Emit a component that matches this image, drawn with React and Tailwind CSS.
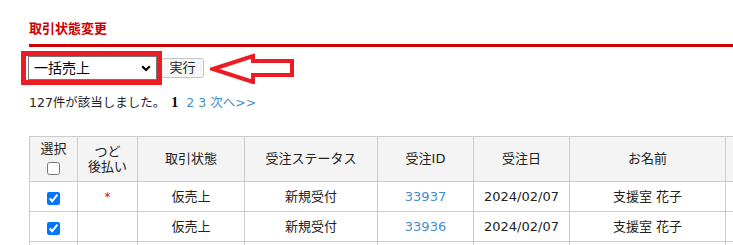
import React from "react";

const font = { fontFamily: '"DejaVu Sans", "Noto Sans CJK JP", sans-serif' };

function Th({ children, w }) {
  return (
    <th className={`border border-[#cccccc] bg-[#f3f4f3] font-normal text-[13px] text-[#222] text-center align-middle p-0 ${w}`}>
      {children}
    </th>
  );
}

function Td({ children, color = "text-[#222]" }) {
  return (
    <td className={`border border-[#cccccc] text-[13px] text-center align-middle p-0 h-[30px] ${color}`}>
      {children}
    </td>
  );
}

function Row({ star, id }) {
  return (
    <tr>
      <Td>
        <input type="checkbox" defaultChecked className="w-[13px] h-[13px] align-middle m-0 mt-[2px]" />
      </Td>
      <Td>{star ? <span className="text-[#ff0000] text-[12px]">*</span> : null}</Td>
      <Td>仮売上</Td>
      <Td>新規受付</Td>
      <Td color="text-[#3f8fcf]">{id}</Td>
      <Td>2024/02/07</Td>
      <Td>支援室 花子</Td>
      <Td></Td>
    </tr>
  );
}

function EmptyRow() {
  return (
    <tr>
      <Td></Td>
      <Td></Td>
      <Td></Td>
      <Td></Td>
      <Td></Td>
      <Td></Td>
      <Td></Td>
      <Td></Td>
    </tr>
  );
}

export default function App() {
  return (
    <div className="w-[733px] h-[245px] overflow-hidden bg-white pl-[29px]" style={font}>
      <div className="pt-[19px] pb-[5px] leading-[20px] text-[13px] font-bold text-[#cc0000] border-b-[3px] border-[#cc0000]">
        取引状態変更
      </div>

      <div className="mt-[9px] flex items-center h-[24px]">
        <div className="relative ml-[-1px]">
          <select
            defaultValue="一括売上"
            className="appearance-none block w-[129px] h-[24px] border border-[#767676] bg-white pl-[5px] text-[14px] text-black leading-[22px] rounded-none"
            style={font}
          >
            <option>一括売上</option>
          </select>
          <svg className="absolute left-[113px] top-[9px] pointer-events-none" width="10" height="7" viewBox="0 0 10 7">
            <path d="M1.2 1.2 L5 5 L8.8 1.2" fill="none" stroke="#000" strokeWidth="2.2" />
          </svg>
          <span className="absolute -left-[7px] -top-[5px] -right-[5px] -bottom-[5px] border-[5px] border-[#ed1c24] pointer-events-none"></span>
        </div>
        <button className="ml-[4px] w-[43px] h-[20px] border border-[#c4c4c4] rounded-[3px] bg-[#f7f7f7] text-[13px] text-[#222] leading-[18px] flex items-center justify-center">
          実行
        </button>
        <svg className="ml-[6px] shrink-0" width="88" height="32" viewBox="0 0 88 32">
          <polygon
            points="3,17 43,4 43,9 82,9 82,23 43,23 43,30"
            fill="none"
            stroke="#ed1c24"
            strokeWidth="4"
            strokeLinejoin="miter"
          />
        </svg>
      </div>

      <div className="mt-[13px] leading-[20px] text-[12.5px] text-[#222] flex items-center">
        <span>127件が該当しました。</span>
        <span className="ml-[6px] font-bold text-black text-[14px]" style={{ fontFamily: '"Liberation Serif", serif' }}>1</span>
        <span className="ml-[8px] text-[#3f8fcf]">2</span>
        <span className="ml-[4px] text-[#3f8fcf]">3</span>
        <span className="ml-[4px] text-[#3f8fcf]">次へ&gt;&gt;</span>
      </div>

      <table className="mt-[23px] border-collapse table-fixed w-[800px]">
        <thead>
          <tr className="h-[45px]">
            <Th w="w-[48px]">
              <div className="leading-[16px]">選択</div>
              <input type="checkbox" className="w-[13px] h-[13px] m-0 mt-[2px] align-middle" />
            </Th>
            <Th w="w-[60px]">
              <div className="leading-[15px]">つど<br />後払い</div>
            </Th>
            <Th w="w-[107px]">取引状態</Th>
            <Th w="w-[133px]">受注ステータス</Th>
            <Th w="w-[96px]">受注ID</Th>
            <Th w="w-[96px]">受注日</Th>
            <Th w="w-[156px]">お名前</Th>
            <Th w="w-[104px]"></Th>
          </tr>
        </thead>
        <tbody>
          <Row star id="33937" />
          <Row id="33936" />
          <EmptyRow />
        </tbody>
      </table>
    </div>
  );
}
